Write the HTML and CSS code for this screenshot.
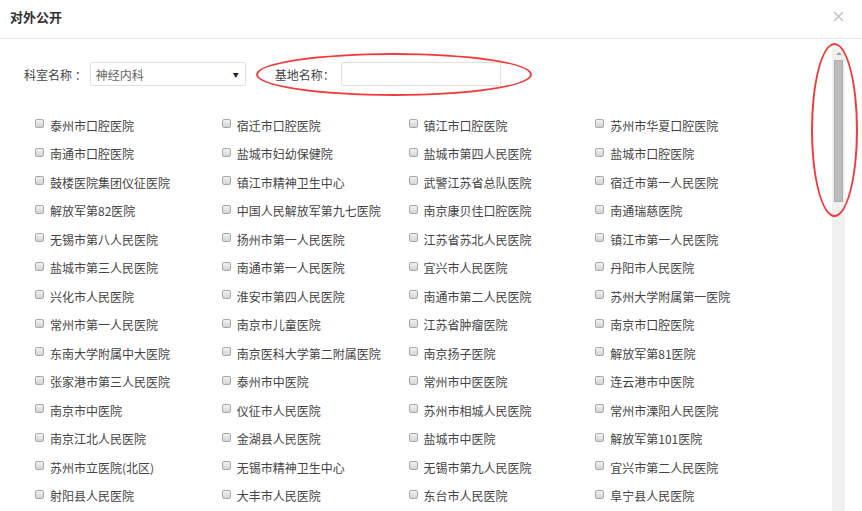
FILE: index.html
```html
<!DOCTYPE html>
<html lang="zh-CN">
<head>
<meta charset="utf-8">
<title>对外公开</title>
<link rel="stylesheet" href="styles.css">
</head>
<body>
<div class="modal">
  <div class="header">
    <span class="title">对外公开</span>
    <span class="close">
      <svg width="11" height="11" viewBox="0 0 11 11"><path d="M1 1L10 10M10 1L1 10" stroke="#c4c4c4" stroke-width="1.6"/></svg>
    </span>
  </div>
  <div class="body">
    <div class="content">
      <div class="form-row">
        <span class="label">科室名称 ：</span>
        <div class="select"><span>神经内科</span><span class="arrow">▼</span></div>
        <span class="label label2">基地名称：</span>
        <div class="input"></div>
      </div>
      <div class="grid">
        <label class="item"><span class="cb"></span>泰州市口腔医院</label>
        <label class="item"><span class="cb"></span>宿迁市口腔医院</label>
        <label class="item"><span class="cb"></span>镇江市口腔医院</label>
        <label class="item"><span class="cb"></span>苏州市华夏口腔医院</label>
        <label class="item"><span class="cb"></span>南通市口腔医院</label>
        <label class="item"><span class="cb"></span>盐城市妇幼保健院</label>
        <label class="item"><span class="cb"></span>盐城市第四人民医院</label>
        <label class="item"><span class="cb"></span>盐城市口腔医院</label>
        <label class="item"><span class="cb"></span>鼓楼医院集团仪征医院</label>
        <label class="item"><span class="cb"></span>镇江市精神卫生中心</label>
        <label class="item"><span class="cb"></span>武警江苏省总队医院</label>
        <label class="item"><span class="cb"></span>宿迁市第一人民医院</label>
        <label class="item"><span class="cb"></span>解放军第82医院</label>
        <label class="item"><span class="cb"></span>中国人民解放军第九七医院</label>
        <label class="item"><span class="cb"></span>南京康贝佳口腔医院</label>
        <label class="item"><span class="cb"></span>南通瑞慈医院</label>
        <label class="item"><span class="cb"></span>无锡市第八人民医院</label>
        <label class="item"><span class="cb"></span>扬州市第一人民医院</label>
        <label class="item"><span class="cb"></span>江苏省苏北人民医院</label>
        <label class="item"><span class="cb"></span>镇江市第一人民医院</label>
        <label class="item"><span class="cb"></span>盐城市第三人民医院</label>
        <label class="item"><span class="cb"></span>南通市第一人民医院</label>
        <label class="item"><span class="cb"></span>宜兴市人民医院</label>
        <label class="item"><span class="cb"></span>丹阳市人民医院</label>
        <label class="item"><span class="cb"></span>兴化市人民医院</label>
        <label class="item"><span class="cb"></span>淮安市第四人民医院</label>
        <label class="item"><span class="cb"></span>南通市第二人民医院</label>
        <label class="item"><span class="cb"></span>苏州大学附属第一医院</label>
        <label class="item"><span class="cb"></span>常州市第一人民医院</label>
        <label class="item"><span class="cb"></span>南京市儿童医院</label>
        <label class="item"><span class="cb"></span>江苏省肿瘤医院</label>
        <label class="item"><span class="cb"></span>南京市口腔医院</label>
        <label class="item"><span class="cb"></span>东南大学附属中大医院</label>
        <label class="item"><span class="cb"></span>南京医科大学第二附属医院</label>
        <label class="item"><span class="cb"></span>南京扬子医院</label>
        <label class="item"><span class="cb"></span>解放军第81医院</label>
        <label class="item"><span class="cb"></span>张家港市第三人民医院</label>
        <label class="item"><span class="cb"></span>泰州市中医院</label>
        <label class="item"><span class="cb"></span>常州市中医医院</label>
        <label class="item"><span class="cb"></span>连云港市中医院</label>
        <label class="item"><span class="cb"></span>南京市中医院</label>
        <label class="item"><span class="cb"></span>仪征市人民医院</label>
        <label class="item"><span class="cb"></span>苏州市相城人民医院</label>
        <label class="item"><span class="cb"></span>常州市溧阳人民医院</label>
        <label class="item"><span class="cb"></span>南京江北人民医院</label>
        <label class="item"><span class="cb"></span>金湖县人民医院</label>
        <label class="item"><span class="cb"></span>盐城市中医院</label>
        <label class="item"><span class="cb"></span>解放军第101医院</label>
        <label class="item"><span class="cb"></span>苏州市立医院(北区)</label>
        <label class="item"><span class="cb"></span>无锡市精神卫生中心</label>
        <label class="item"><span class="cb"></span>无锡市第九人民医院</label>
        <label class="item"><span class="cb"></span>宜兴市第二人民医院</label>
        <label class="item"><span class="cb"></span>射阳县人民医院</label>
        <label class="item"><span class="cb"></span>大丰市人民医院</label>
        <label class="item"><span class="cb"></span>东台市人民医院</label>
        <label class="item"><span class="cb"></span>阜宁县人民医院</label>
      </div>
    </div>
    <div class="scrollbar">
      <div class="sb-up"></div>
      <div class="sb-thumb"></div>
    </div>
  </div>
  <div class="mark mark-base"></div>
  <div class="mark mark-scroll"></div>
</div>
</body>
</html>
```

FILE: styles.css
```css
html, body {
  margin: 0;
  padding: 0;
  background: #fff;
}
body {
  width: 862px;
  height: 511px;
  overflow: hidden;
  font-family: "Noto Sans CJK SC", "Liberation Sans", sans-serif;
  font-size: 12px;
  color: #444;
}
.modal {
  position: relative;
  width: 862px;
  height: 511px;
  overflow: hidden;
}
.header {
  height: 38px;
  border-bottom: 1px solid #e8e8e8;
  display: flex;
  align-items: center;
  justify-content: space-between;
  padding: 0 18px 0 10px;
  box-sizing: content-box;
}
.title {
  font-size: 13px;
  font-weight: bold;
  color: #333;
  margin-top: -6px;
}
.close {
  display: flex;
  margin-top: -6px;
}
.body {
  display: flex;
  height: 472px;
}
.content {
  flex: 1;
  padding-top: 23px;
}
.form-row {
  display: flex;
  align-items: center;
  height: 24px;
  padding-left: 24px;
}
.label {
  color: #444;
  white-space: nowrap;
}
.select {
  margin-left: 3px;
  width: 156px;
  height: 24px;
  box-sizing: border-box;
  border: 1px solid #e0e0e0;
  border-radius: 2px;
  display: flex;
  align-items: center;
  justify-content: space-between;
  padding: 0 5px 0 5px;
  color: #666;
}
.arrow {
  font-size: 6px;
  color: #222;
  margin-right: 1px;
}
.label2 {
  margin-left: 29px;
}
.input {
  margin-left: 6px;
  width: 160px;
  height: 24px;
  box-sizing: border-box;
  border: 1px solid #e0e0e0;
  border-radius: 2px;
}
.grid {
  margin-top: 25px;
  padding-left: 35px;
  display: grid;
  grid-template-columns: repeat(4, 186.75px);
  grid-auto-rows: 28.5px;
}
.item {
  display: flex;
  align-items: center;
  white-space: nowrap;
  color: #444;
}
.cb {
  width: 9px;
  height: 9px;
  box-sizing: border-box;
  border: 1px solid #a8a8a8;
  border-radius: 2px;
  background: linear-gradient(#f2f2f2, #d4d4d4);
  margin-right: 6px;
  margin-top: -3px;
}
.scrollbar {
  width: 13px;
  margin: 9px 17px 0 0;
  background: #f0f0f0;
  display: flex;
  flex-direction: column;
  align-items: center;
}
.sb-up {
  width: 0;
  height: 0;
  border-left: 3px solid transparent;
  border-right: 3px solid transparent;
  border-bottom: 3px solid #a3a3a3;
  margin-top: 4px;
}
.sb-thumb {
  width: 9px;
  height: 142px;
  box-sizing: border-box;
  margin-top: 5px;
  background: #bcbcbc;
  border: 1px solid #ababab;
}
.mark {
  position: absolute;
  border: 2px solid #f23a3a;
  border-radius: 50%;
  box-sizing: border-box;
}
.mark-base {
  left: 256px;
  top: 53px;
  width: 276px;
  height: 43px;
}
.mark-scroll {
  left: 811px;
  top: 43px;
  width: 47px;
  height: 174px;
}
```
